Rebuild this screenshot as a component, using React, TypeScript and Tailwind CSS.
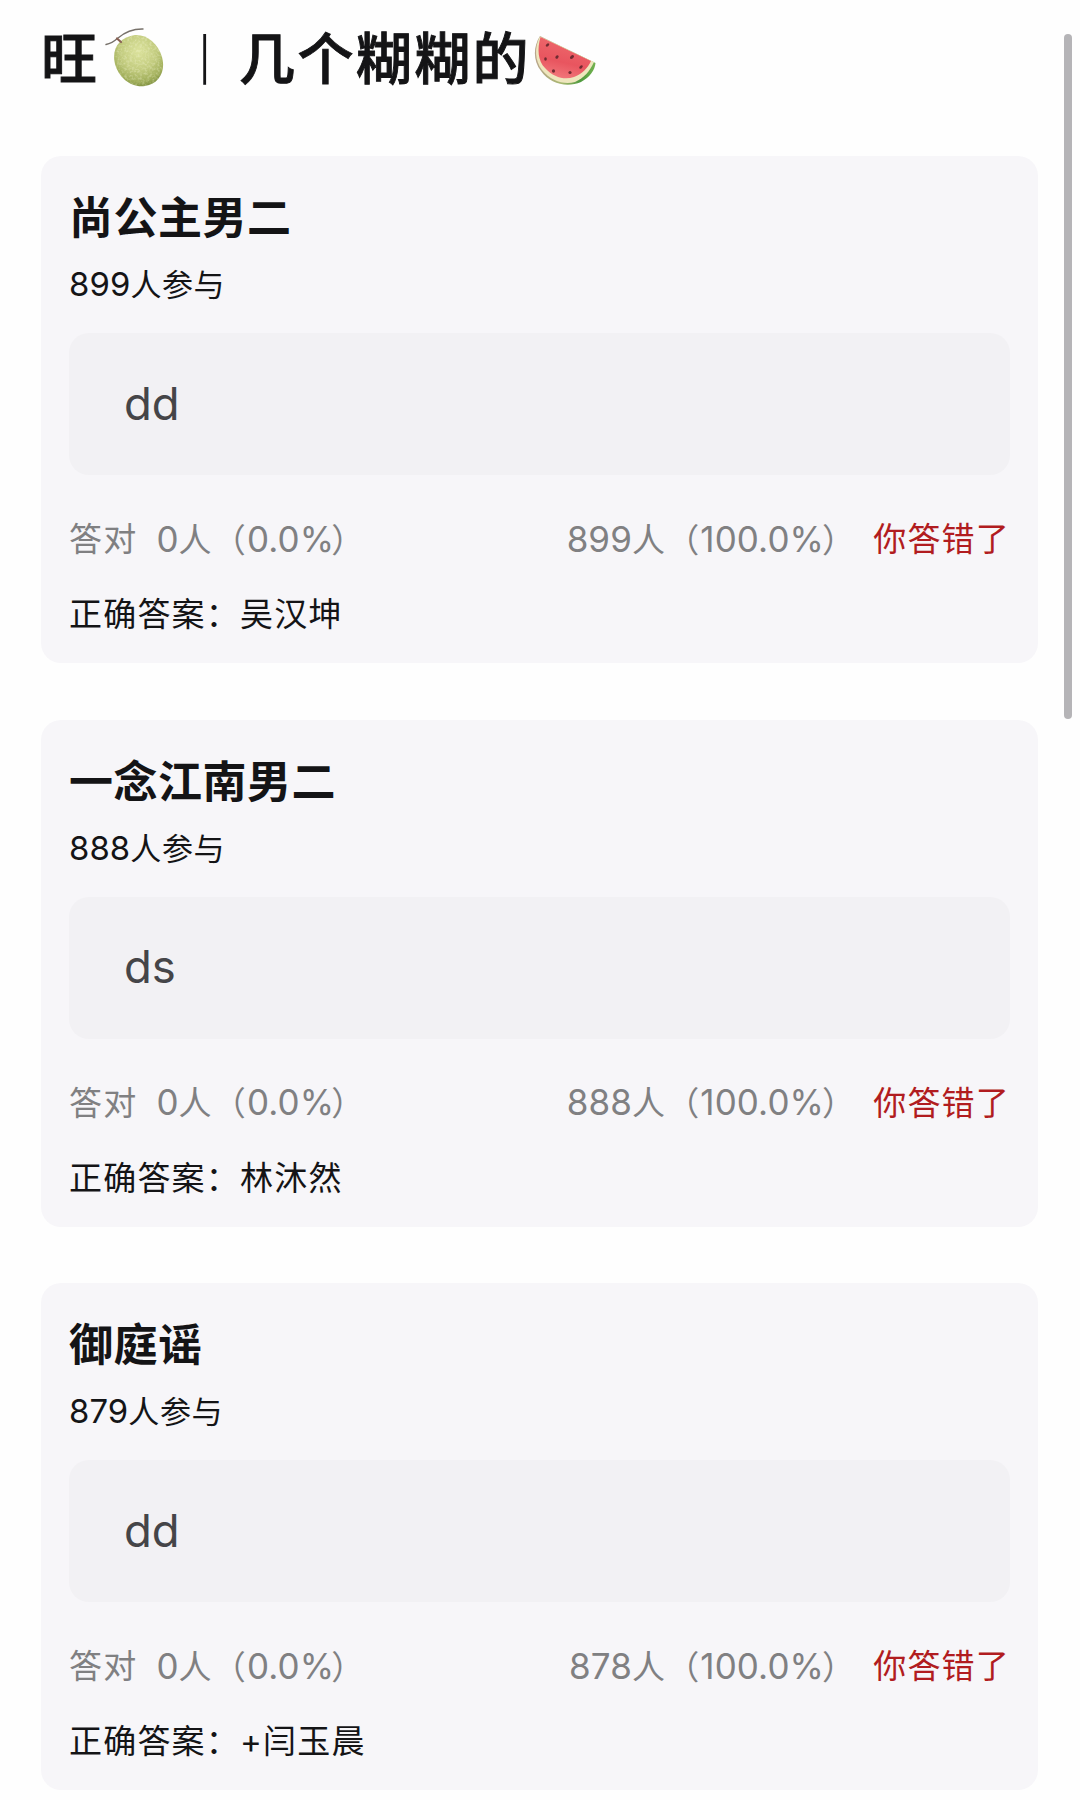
import type { ReactNode } from 'react'

type Question = {
  title: string
  joined: number
  reply: string
  wrong: number
  answer: string
}

const questions: Question[] = [
  { title: '尚公主男二', joined: 899, reply: 'dd', wrong: 899, answer: '吴汉坤' },
  { title: '一念江南男二', joined: 888, reply: 'ds', wrong: 888, answer: '林沐然' },
  { title: '御庭谣', joined: 879, reply: 'dd', wrong: 878, answer: '+闫玉晨' },
]

function Melon({ className }: { className?: string }) {
  return (
    <svg viewBox="0 0 60 60" className={className} aria-hidden="true">
      <defs>
        <radialGradient id="melon-skin" cx="0.5" cy="0.32" r="0.72">
          <stop offset="0" stopColor="#dbe29c" />
          <stop offset="0.5" stopColor="#c3cc80" />
          <stop offset="0.82" stopColor="#a0ae5a" />
          <stop offset="1" stopColor="#788a3c" />
        </radialGradient>
        <filter id="melon-net" x="0" y="0" width="1" height="1">
          <feTurbulence type="fractalNoise" baseFrequency="0.4" numOctaves="2" seed="4" />
          <feColorMatrix values="0 0 0 0 0.94  0 0 0 0 0.95  0 0 0 0 0.7  0 3 0 0 -1.3" />
          <feComposite in2="SourceGraphic" operator="in" />
        </filter>
      </defs>
      <path
        d="M30 7C41 6 53 15 57 29 61 43 54 56 40 58 26 60 14 50 10 36 6 20 15 9 30 7Z"
        fill="url(#melon-skin)"
      />
      <path
        d="M30 7C41 6 53 15 57 29 61 43 54 56 40 58 26 60 14 50 10 36 6 20 15 9 30 7Z"
        filter="url(#melon-net)"
        opacity="0.3"
      />
      <path d="M1 16.500C6 15.500 9 13.500 13 10 20 4 29 .800 38 1" fill="none" stroke="#77716a" strokeWidth="1.400" strokeLinecap="round" />
      <path d="M12 10.500 16 14" fill="none" stroke="#8a6254" strokeWidth="2.200" strokeLinecap="round" />
    </svg>
  )
}

function Watermelon({ className }: { className?: string }) {
  return (
    <svg viewBox="0 0 62 50" className={className} aria-hidden="true">
      <defs>
        <linearGradient id="flesh" x1="0.6" y1="0" x2="0.3" y2="1">
          <stop offset="0" stopColor="#ee6b6d" />
          <stop offset="0.6" stopColor="#e8555f" />
          <stop offset="1" stopColor="#f2797d" />
        </linearGradient>
        <linearGradient id="rind" x1="0" y1="0" x2="1" y2="0">
          <stop offset="0" stopColor="#b9a58c" />
          <stop offset="0.45" stopColor="#a8b870" />
          <stop offset="0.75" stopColor="#4f9a3e" />
          <stop offset="1" stopColor="#74b250" />
        </linearGradient>
      </defs>
      <path d="M6 0C-1 11-1 25 7 35 16 48 33 52 47 46 56 41 61 34 61.500 27Z" fill="url(#rind)" />
      <path d="M6 .5C0 12 1 25 8 34 17 45 30 49 41 46 50 42 56 35 60 26Z" fill="#eee6bd" />
      <path d="M6.500 1C3 13 4 25 11 32 20 42 31 44 40 41 48 38 54 32 57 25Z" fill="url(#flesh)" />
      <g fill="#702b31">
        <ellipse cx="13.500" cy="9" rx="2" ry="1.300" transform="rotate(-40 13.500 9)" />
        <ellipse cx="23" cy="21" rx="1.900" ry="1.400" transform="rotate(-50 23 21)" />
        <ellipse cx="38" cy="21" rx="2.300" ry="1.500" transform="rotate(-40 38 21)" />
        <ellipse cx="11.500" cy="23" rx="1.300" ry="1.700" />
        <ellipse cx="19.500" cy="35" rx="1.600" ry="1.800" />
        <ellipse cx="36" cy="36.500" rx="1.600" ry="1.500" />
        <ellipse cx="47" cy="31" rx="2.100" ry="1.300" transform="rotate(-45 47 31)" />
      </g>
    </svg>
  )
}

// digits run slightly larger and tighter than the hanzi around them
function Num({ children }: { children: ReactNode }) {
  return <span className="text-[1.06em] tracking-[0.1px]">{children}</span>
}

function QuestionCard({ question }: { question: Question }) {
  return (
    <section className="h-[507px] rounded-[20px] bg-[#f7f6f9] px-[28px] pt-[34px]">
      <h2 className="h-[56px] text-[44px] leading-[56px] font-bold tracking-[0.5px] text-[#141416]">{question.title}</h2>
      <p className="mt-[16px] h-[44px] text-[31px] leading-[44px] tracking-[0.6px]">
        <Num>{question.joined}</Num>人参与
      </p>
      <div className="mt-[27px] flex h-[142px] items-center rounded-[20px] bg-[#f2f1f4] px-[55px] text-[45.5px] text-[#454548]">
        {question.reply}
      </div>
      <div className="mt-[41px] flex h-[46px] items-center text-[33px] leading-[46px] tracking-[1.2px] whitespace-pre text-[#808082]">
        <span>答对</span>
        <span className="ml-[19px]">
          <Num>0</Num>人（<Num>0.0%</Num>
          <span className="-ml-[3px]">）</span>
        </span>
        <span className="ml-auto">
          <Num>{question.wrong}</Num>人（<Num>100.0%</Num>
          <span className="-ml-[2px]">）</span>
        </span>
        <span className="ml-[17px] text-[#b11c20]">你答错了</span>
      </div>
      <p className="mt-[29px] h-[46px] text-[33px] leading-[46px] tracking-[1.2px]">正确答案：{question.answer}</p>
    </section>
  )
}

export default function App() {
  return (
    <div className="relative h-[1800px] w-[1080px] overflow-hidden bg-[#fefefe] pr-[42px] pl-[41px] font-['Inter','Noto_Sans_CJK_SC',sans-serif] text-[#141416]">
      <h1 className="flex h-[156px] items-start pt-[19px] text-[56px] leading-[80px] font-medium tracking-[2.4px]">
        <span className="w-[64px] [-webkit-text-stroke:0.9px_#141416]">旺</span>
        <Melon className="mt-[9px] h-[60px] w-[60px]" />
        <span className="mt-[1px] w-[74px] pl-[8px] text-center text-[56px] font-light">丨</span>
        <span className="w-[295px] whitespace-nowrap [-webkit-text-stroke:0.9px_#141416]">几个糊糊的</span>
        <Watermelon className="mt-[17px] h-[50px] w-[62px]" />
      </h1>
      <main className="flex flex-col gap-[56.5px]">
        {questions.map((question) => (
          <QuestionCard key={question.title} question={question} />
        ))}
      </main>
      {/* scroll thumb */}
      <div className="absolute top-[34px] right-[8px] h-[685px] w-[8px] rounded-full bg-[#b5b4b7]" />
    </div>
  )
}
